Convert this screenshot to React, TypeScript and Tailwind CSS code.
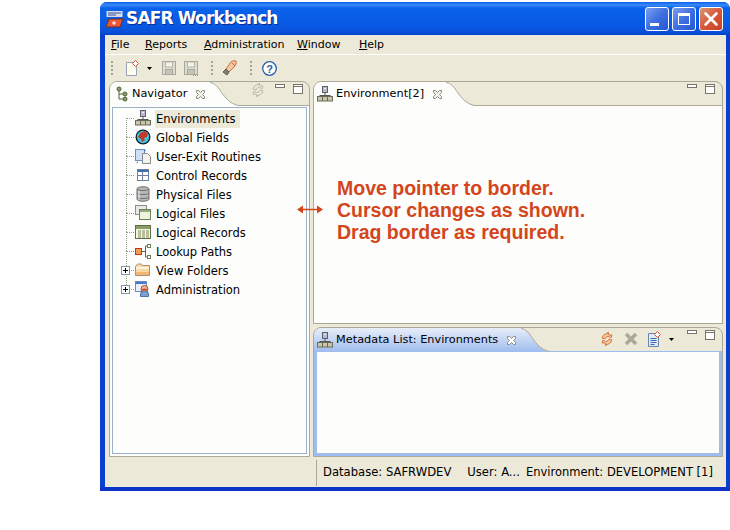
import React from "react";

const Net = ({ className = "" }: { className?: string }) => (
  <svg width="16" height="16" viewBox="0 0 16 16" className={className}>
    <rect x="5.5" y="0.5" width="5" height="6" fill="#b8bcc8" stroke="#5a6070" />
    <rect x="7" y="2" width="2" height="1" fill="#eef" />
    <path d="M8 7v3M2.5 9.5h11" stroke="#555" fill="none" />
    <rect x="0.5" y="10.5" width="15" height="4.5" fill="#c9c5a8" stroke="#6a6a58" />
    <path d="M5.5 11v4M10.5 11v4" stroke="#6a6a58" />
  </svg>
);

const Globe = () => (
  <svg width="16" height="16" viewBox="0 0 16 16">
    <circle cx="8" cy="8" r="7.5" fill="#101828" />
    <circle cx="8" cy="8" r="6.2" fill="#38c8e0" />
    <path d="M5 4l5-2 3 3-1 3-3 1 1 2-3 2-1-3-3-2z" fill="#c8382a" />
  </svg>
);

const UserExit = () => (
  <svg width="16" height="16" viewBox="0 0 16 16">
    <rect x="0.5" y="1.5" width="9" height="11" fill="#cfe0f8" stroke="#6c8cc0" />
    <path d="M7.5 5.5h5l3 3v7h-8z" fill="#f2f2ee" stroke="#8a8a8a" />
    <path d="M9 1l2 1.500-2 1.500zM1 15l2-1.500V15z" fill="#4a80c8" />
  </svg>
);

const Table = () => (
  <svg width="16" height="16" viewBox="0 0 16 16">
    <rect x="2.500" y="2.500" width="11" height="11" fill="#fff" stroke="#6f8098" />
    <rect x="3" y="3" width="10" height="2" fill="#3d6db0" />
    <path d="M2.500 8.500h11M7.500 5v8" stroke="#6f8098" />
  </svg>
);

const Db = () => (
  <svg width="16" height="16" viewBox="0 0 16 16">
    <path d="M2 3c0-3 12-3 12 0v10c0 3-12 3-12 0z" fill="#b8b8b8" stroke="#707070" />
    <path d="M2 3c0 2 12 2 12 0M2 7c0 2 12 2 12 0M2 11c0 2 12 2 12 0" stroke="#707070" fill="none" />
    <path d="M4 5v8" stroke="#efefef" />
  </svg>
);

const LogicalFile = () => (
  <svg width="16" height="16" viewBox="0 0 16 16">
    <rect x="0.500" y="0.500" width="11" height="9" fill="#e8e8e8" stroke="#8c8c8c" />
    <rect x="4.500" y="4.500" width="11" height="10" fill="#eef4dc" stroke="#6e7e58" />
    <rect x="5" y="5" width="10" height="2" fill="#98ab7c" />
  </svg>
);

const LogicalRec = () => (
  <svg width="16" height="16" viewBox="0 0 16 16">
    <rect x="0.500" y="1.500" width="15" height="13" fill="#f4f6dc" stroke="#5f6f48" />
    <rect x="1" y="2" width="14" height="3" fill="#8a9c68" />
    <path d="M3 7h3M7 7h3M11 7h3M3 9h3M7 9h3M11 9h3M3 11h3M7 11h3M11 11h3M3 13h3M7 13h3M11 13h3" stroke="#7a8a58" />
  </svg>
);

const Lookup = () => (
  <svg width="16" height="16" viewBox="0 0 16 16">
    <rect x="0.500" y="5.500" width="6" height="6" fill="#f0a050" stroke="#c83020" />
    <path d="M7 8.500h3M10.500 3v11M10.500 3h2M10.500 14h2" stroke="#606060" fill="none" />
    <rect x="12.500" y="1.500" width="3" height="3" fill="#fff" stroke="#6e7e58" />
    <rect x="12.500" y="12.500" width="3" height="3" fill="#fff" stroke="#6e7e58" />
  </svg>
);

const Folder = () => (
  <svg width="16" height="16" viewBox="0 0 16 16">
    <path d="M0.500 4.500v9h14v-10h-7l-1 -1.500h-4z" fill="#f8d8a8" stroke="#b09070" />
    <rect x="1" y="5" width="13" height="2" fill="#fdf2dc" />
    <rect x="1" y="10" width="13" height="3" fill="#f0b878" />
  </svg>
);

const Admin = () => (
  <svg width="16" height="16" viewBox="0 0 16 16">
    <rect x="0.500" y="0.500" width="11" height="10" fill="#e8f0fc" stroke="#6c8cc0" />
    <rect x="1" y="1" width="10" height="2" fill="#4878c8" />
    <circle cx="9.500" cy="8" r="3.500" fill="#f0b890" stroke="#b84828" />
    <path d="M6 9.500a4 4 0 0 1 7 0" fill="#c84828" />
    <path d="M5.500 15.500v-2.500a4 3 0 0 1 8 0v2.500z" fill="#7ca0d0" stroke="#50709c" />
  </svg>
);

const CloseX = ({ dim = false }: { dim?: boolean }) => (
  <svg width="11" height="11" viewBox="0 0 11 11">
    <path
      d="M1.500 1.500h2l2 2 2-2h2v2l-2 2 2 2v2h-2l-2-2-2 2h-2v-2l2-2-2-2z"
      fill={dim ? "#fff" : "#f4f2e8"}
      stroke="#8a8a80"
    />
  </svg>
);

const MinMax = () => (
  <div className="flex items-start gap-[8px]">
    <svg width="10" height="5" viewBox="0 0 10 5" className="mt-[1px]">
      <rect x="0.500" y="0.500" width="9" height="3" fill="#fff" stroke="#77756a" />
    </svg>
    <svg width="10" height="10" viewBox="0 0 10 10" className="mt-[1px]">
      <rect x="0.500" y="0.500" width="9" height="9" fill="#fff" stroke="#77756a" />
      <path d="M1 2.500h8" stroke="#77756a" />
    </svg>
  </div>
);

const Sync = ({ color, accent }: { color: string; accent: string }) => (
  <svg width="16" height="16" viewBox="0 0 16 16">
    <path d="M9 1l1 3 3 0-1 3c-1-1-2-1.500-3-1.500-1.500 0-2.500 1-3 2.500l-3-1c1-3 3-4.500 6-4.500z" fill={accent} stroke={color} strokeWidth="0.800" />
    <path d="M7 15l-1-3-3 0 1-3c1 1 2 1.500 3 1.500 1.500 0 2.500-1 3-2.500l3 1c-1 3-3 4.500-6 4.500z" fill={accent} stroke={color} strokeWidth="0.800" />
  </svg>
);

const Grip = () => (
  <div className="flex flex-col gap-[2px]">
    {[0, 1, 2, 3].map((i) => (
      <div key={i} className="w-[2px] h-[2px] bg-[#a8a596]" />
    ))}
  </div>
);

const DropArrow = () => (
  <svg width="5" height="3" viewBox="0 0 5 3">
    <path d="M0 0h5L2.500 3z" fill="#000" />
  </svg>
);

const NewDoc = ({ w = 14 }: { w?: number }) => (
  <svg width={w} height="16" viewBox="0 0 14 16">
    <path d="M0.500 2.500h7l3 3v10h-10z" fill="#fdfdf0" stroke="#98a4b4" />
    <path d="M9.500 0.500l3 3-3 3-3-3z" fill="#fff" stroke="#d85030" />
  </svg>
);

const ListDoc = () => (
  <svg width="14" height="16" viewBox="0 0 14 16">
    <path d="M0.500 2.500h7l3 3v10h-10z" fill="#dfe9f6" stroke="#6e86a8" />
    <path d="M2.500 7.500h6M2.500 9.500h6M2.500 11.500h6M2.500 13.500h4" stroke="#3d6db0" />
    <path d="M9.500 0.500l3 3-3 3-3-3z" fill="#fff" stroke="#d85030" />
  </svg>
);

const SaveIcon = ({ dots = false }: { dots?: boolean }) => (
  <svg width="15" height="15" viewBox="0 0 15 15">
    <rect x="0.500" y="0.500" width="13" height="13" fill="#dcdcd0" stroke="#a8a89c" />
    <rect x="3.500" y="1" width="7" height="5" fill="#f4f4ec" stroke="#b4b4a8" />
    <rect x="3.500" y="8.500" width="7" height="5" fill="#c4c4b8" stroke="#a8a89c" />
    {dots && <path d="M9 14.500h1M11 14.500h1M13 14.500h1" stroke="#999" />}
  </svg>
);

const Rocket = () => (
  <svg width="17" height="17" viewBox="0 0 17 17">
    <path d="M10 2c2-1.500 4-1.500 5-1 .5 2 0 4-2 6l-5 5-3-3z" fill="#f4c8a0" stroke="#c07040" />
    <path d="M5 9l3 3-2 3-4-3z" fill="#808078" stroke="#585850" />
    <path d="M11 3l3 3" stroke="#d86030" />
  </svg>
);

const Help = () => (
  <svg width="15" height="15" viewBox="0 0 15 15">
    <circle cx="7.500" cy="7.500" r="6.800" fill="#fff" stroke="#2a5ca8" strokeWidth="1.300" />
    <text x="7.500" y="11.500" textAnchor="middle" fontSize="11" fontWeight="700" fontFamily="Liberation Sans" fill="#2a5ca8">?</text>
  </svg>
);

const rows: { label: string; icon: React.ReactNode; plus?: boolean; sel?: boolean }[] = [
  { label: "Environments", icon: <Net />, sel: true },
  { label: "Global Fields", icon: <Globe /> },
  { label: "User-Exit Routines", icon: <UserExit /> },
  { label: "Control Records", icon: <Table /> },
  { label: "Physical Files", icon: <Db /> },
  { label: "Logical Files", icon: <LogicalFile /> },
  { label: "Logical Records", icon: <LogicalRec /> },
  { label: "Lookup Paths", icon: <Lookup /> },
  { label: "View Folders", icon: <Folder />, plus: true },
  { label: "Administration", icon: <Admin />, plus: true },
];

const Menu = ({ k, rest, className }: { k: string; rest: string; className: string }) => (
  <span className={className}>
    <span className="underline">{k}</span>
    {rest}
  </span>
);

const Curve = ({ fill, stroke }: { fill: string; stroke: string }) => (
  <svg width="28" height="24" viewBox="0 0 28 24" className="shrink-0 block">
    <path d="M0 0C10 0 12 20 28 23.500L28 24L0 24z" fill={fill} />
    <path d="M0 0.500C10 0.500 12 20 28 23.500" stroke={stroke} fill="none" />
  </svg>
);

export default function App() {
  return (
    <div className="w-[730px] h-[530px] bg-white pl-[100px] pt-[2px] text-[11.3px] text-black font-['DejaVu_Sans',sans-serif] overflow-hidden relative">
      <div className="w-[630px] h-[489px] rounded-t-[7px] flex flex-col bg-[#0a3fd0] border-b-[4px] border-b-[#0a35c8]">
        {/* Title bar */}
        <div className="h-[33px] shrink-0 rounded-t-[7px] flex items-center pl-[6px] pr-[7px] bg-[linear-gradient(#0a5ee8_0px,#3a8cf8_3px,#0a62ea_6px,#0858e4_24px,#0a4fd8_30px,#0044cc_33px)]">
          <svg width="18" height="18" viewBox="0 0 18 18" className="shrink-0">
            <rect x="0.500" y="1" width="16" height="6" fill="#d8dce8" />
            <path d="M2 3h13M2 5h8" stroke="#3850a0" />
            <path d="M3 9h14l-3 8H0z" fill="#e85838" stroke="#703020" />
            <path d="M8 11v4M6 13h4" stroke="#fff" />
          </svg>
          <span className="ml-[2px] text-[17px] font-bold leading-none text-white font-['DejaVu_Sans',sans-serif] tracking-[-0.85px] [text-shadow:1px_1px_0_#0a2a90]">
            SAFR Workbench
          </span>
          <div className="ml-auto flex gap-[3px]">
            <div className="w-[24px] h-[24px] rounded-[3px] border border-white bg-[linear-gradient(135deg,#7d9ff0,#3f6fe0_50%,#2458d4)] flex items-end pl-[4px] pb-[4px]">
              <div className="w-[9px] h-[3px] bg-white" />
            </div>
            <div className="w-[24px] h-[24px] rounded-[3px] border border-white bg-[linear-gradient(135deg,#7d9ff0,#3f6fe0_50%,#2458d4)] flex items-center justify-center">
              <div className="w-[12px] h-[12px] border border-white border-t-[3px]" />
            </div>
            <div className="w-[24px] h-[24px] rounded-[3px] border border-white bg-[linear-gradient(135deg,#d89878,#d8583a_50%,#c84020)] flex items-center justify-center">
              <svg width="16" height="16" viewBox="0 0 16 16">
                <path d="M2.500 2.500l11 11M13.500 2.500l-11 11" stroke="#fff" strokeWidth="2.600" strokeLinecap="round" />
              </svg>
            </div>
          </div>
        </div>

        {/* Client area */}
        <div className="flex-1 min-h-0 ml-[5px] mr-[4px] bg-[#ece9d8] flex flex-col">
          {/* Menu */}
          <div className="h-[19px] shrink-0 flex items-center pl-[6px] pt-[2px] text-[11px]">
            <Menu k="F" rest="ile" className="w-[34px]" />
            <Menu k="R" rest="eports" className="w-[59px]" />
            <Menu k="A" rest="dministration" className="w-[93px]" />
            <Menu k="W" rest="indow" className="w-[62px]" />
            <Menu k="H" rest="elp" className="" />
          </div>
          <div className="h-[1px] bg-white shrink-0" />
          {/* Toolbar */}
          <div className="h-[26px] shrink-0 flex items-center pl-[6px]">
            <Grip />
            <div className="ml-[13px]"><NewDoc /></div>
            <div className="ml-[7px]"><DropArrow /></div>
            <div className="ml-[10px]"><SaveIcon /></div>
            <div className="ml-[7px]"><SaveIcon dots /></div>
            <div className="ml-[12px]"><Grip /></div>
            <div className="ml-[8px]"><Rocket /></div>
            <div className="ml-[12px]"><Grip /></div>
            <div className="ml-[10px]"><Help /></div>
          </div>

          {/* Panels */}
          <div className="flex-1 min-h-0 flex pl-[4px] pr-[3px] gap-[3px]">
            {/* Navigator */}
            <div className="w-[201px] shrink-0 flex flex-col border border-[#aca899] rounded-t-[8px] bg-[#ece9d8]">
              <div className="h-[24px] shrink-0 flex">
                <div className="w-[100px] shrink-0 rounded-tl-[7px] bg-[#fdfdfb] flex items-center pl-[6px]">
                  <svg width="14" height="16" viewBox="0 0 14 16">
                    <circle cx="3" cy="3" r="2" fill="#8a9c68" stroke="#506038" />
                    <circle cx="9" cy="8" r="2" fill="#8a9c68" stroke="#506038" />
                    <circle cx="9" cy="13" r="2" fill="#8a9c68" stroke="#506038" />
                    <path d="M3 5v8h4M3 8h4" stroke="#506038" fill="none" />
                  </svg>
                  <span className="ml-[2px]">Navigator</span>
                  <span className="ml-[8px] flex"><CloseX /></span>
                </div>
                <Curve fill="#fdfdfb" stroke="#aca899" />
                <div className="flex-1 relative flex justify-end pr-[6px] pt-[1px] border-b border-[#aca899] gap-[9px] h-[24px]">
                  <div className="-mt-[1px]"><Sync color="#b0ae9f" accent="#ece9d8" /></div>
                  <MinMax />
                </div>
              </div>
              <div className="flex-1 min-h-0 bg-[#fdfdfb] p-[1px] px-[2px] pb-[2px]">
                <div className="h-full border border-[#9cb0c8] pt-[1px] flex flex-col relative text-[11.5px]">
                  {rows.map((r, i) => (
                    <div key={r.label} className="h-[19px] shrink-0 flex items-center relative">
                      <div className="w-[42px] shrink-0 relative h-full">
                        {i < 9 && (
                          <div className="absolute left-[13px] top-[9px] h-[19px] border-l border-dotted border-[#9a9a90]" />
                        )}
                        <div className="absolute left-[13px] top-[9px] w-[8px] border-t border-dotted border-[#9a9a90]" />
                        {r.plus && (
                          <div className="absolute left-[8px] top-[5px] w-[9px] h-[9px] bg-white border border-[#7a98b0] flex items-center justify-center">
                            <svg width="7" height="7" viewBox="0 0 7 7">
                              <path d="M1 3.500h5M3.500 1v5" stroke="#000" />
                            </svg>
                          </div>
                        )}
                        <div className="absolute left-[22px] top-[1px]">{r.icon}</div>
                      </div>
                      <span className={`h-[18px] leading-[18px] pl-[1px] pr-[5px] whitespace-nowrap ${r.sel ? "bg-[#ece9d8]" : ""}`}>
                        {r.label}
                      </span>
                    </div>
                  ))}
                </div>
              </div>
            </div>

            {/* Right column */}
            <div className="flex-1 min-w-0 flex flex-col gap-[3px]">
              <div className="flex-1 min-h-0 flex flex-col border border-[#aca899] rounded-t-[8px] bg-[#ece9d8]">
                <div className="h-[24px] shrink-0 flex">
                  <div className="w-[132px] shrink-0 rounded-tl-[7px] bg-[#fdfdfb] flex items-center pl-[3px]">
                    <Net />
                    <span className="ml-[3px]">Environment[2]</span>
                    <span className="ml-[8px] flex"><CloseX /></span>
                  </div>
                  <Curve fill="#fdfdfb" stroke="#aca899" />
                  <div className="flex-1 flex justify-end pr-[7px] pt-[1px] border-b border-[#aca899]">
                    <MinMax />
                  </div>
                </div>
                <div className="flex-1 bg-[#fdfdfb]" />
              </div>

              <div className="h-[130px] shrink-0 flex flex-col rounded-t-[8px] border border-[#aca899] bg-[#ece9d8]">
                <div className="h-[24px] shrink-0 flex">
                  <div className="w-[207px] shrink-0 rounded-tl-[7px] bg-[linear-gradient(#e8eefa,#9ebcee)] flex items-center pl-[3px]">
                    <Net />
                    <span className="ml-[3px]">Metadata List: Environments</span>
                    <span className="ml-[8px] flex"><CloseX dim /></span>
                  </div>
                  <svg width="28" height="24" viewBox="0 0 28 24" className="shrink-0 block">
                    <defs>
                      <linearGradient id="g" x1="0" y1="0" x2="0" y2="1">
                        <stop offset="0" stopColor="#e8eefa" />
                        <stop offset="1" stopColor="#9ebcee" />
                      </linearGradient>
                    </defs>
                    <path d="M0 0C10 0 12 20 28 24L0 24z" fill="url(#g)" />
                    <path d="M0 0.500C10 0.500 12 20 28 23.500" stroke="#aca899" fill="none" />
                  </svg>
                  <div className="flex-1 flex items-start justify-end pr-[7px] pt-[1px] border-b border-[#9ebcee]">
                    <div className="mt-[2px] flex items-center">
                      <Sync color="#d06030" accent="#f4c890" />
                      <svg width="14" height="14" viewBox="0 0 14 14" className="ml-[9px]">
                        <path d="M2 2l10 10M12 2L2 12" stroke="#aaa898" strokeWidth="3.500" />
                      </svg>
                      <div className="ml-[10px] flex"><ListDoc /></div>
                      <div className="ml-[7px] flex"><DropArrow /></div>
                    </div>
                    <div className="ml-[13px]"><MinMax /></div>
                  </div>
                </div>
                <div className="flex-1 bg-[#fdfdfb] border-[3px] border-t-0 border-[#9ebcee]" />
              </div>
            </div>
          </div>

          {/* Status */}
          <div className="h-[29px] shrink-0 flex items-center mt-[1px] text-[11.6px]">
            <div className="w-[211px] shrink-0" />
            <div className="h-[26px] w-[1px] bg-[#aca899]" />
            <span className="ml-[6px]">Database: SAFRWDEV</span>
            <span className="ml-[16px]">User: A...</span>
            <span className="ml-[6px] text-[11.5px]">Environment: DEVELOPMENT [1]</span>
          </div>
        </div>
      </div>

      {/* Annotation */}
      <div className="absolute left-[337px] top-[177px] text-[19.5px] leading-[22px] font-bold text-[#d4451c] font-['Liberation_Sans',sans-serif]">
        <div>Move pointer to border.</div>
        <div>Cursor changes as shown.</div>
        <div>Drag border as required.</div>
      </div>
      <svg width="26" height="9" viewBox="0 0 26 9" className="absolute left-[297px] top-[205px]">
        <path d="M4 4.500h18" stroke="#d4451c" strokeWidth="1.500" />
        <path d="M0 4.500L6 0.500v8zM26 4.500L20 0.500v8z" fill="#d4451c" />
      </svg>
    </div>
  );
}
